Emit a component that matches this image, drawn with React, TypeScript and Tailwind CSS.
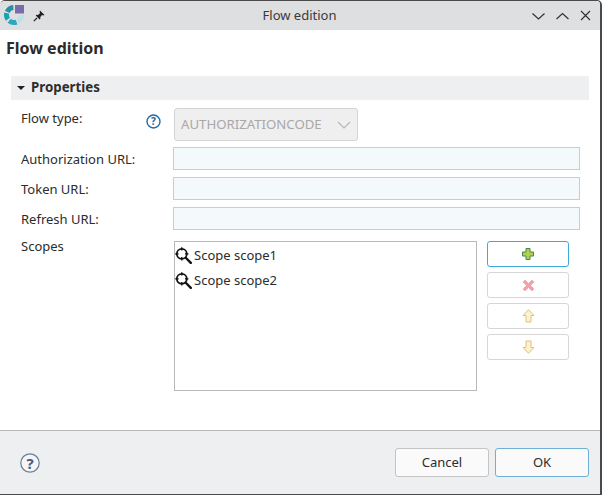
import { ReactNode } from 'react';

function AppLogo() {
  return (
    <svg width="21" height="21" viewBox="0 0 21 21" fill="none" strokeWidth="5">
      <rect x="11" y="0" width="9" height="8.5" fill="#7a6bab" />
      <path d="M9.35 2.53 A7.5 7.5 0 0 0 3.2 6.83" stroke="#2a8fa3" />
      <path d="M2.76 8.06 A7.5 7.5 0 0 0 3.86 14.3" stroke="#18a2b4" />
      <path d="M5.18 15.75 A7.5 7.5 0 0 0 12.57 17.05" stroke="#2fa9ba" />
      <path d="M13.75 16.5 A7.5 7.5 0 0 0 17.5 10" stroke="#b5e3e8" />
    </svg>
  );
}

function PinIcon() {
  return (
    <svg width="12" height="12" viewBox="0 0 12 12">
      <path d="M7 0.5 L11.5 5 L10.2 5.6 L9 5 L7.2 7.2 L7.4 8.8 L6.6 9.4 L2.8 5.5 L3.4 4.7 L5 4.9 L7.2 3 L6.5 1.8 Z" fill="#222" />
      <path d="M4 8 L0.8 11.2" stroke="#222" strokeWidth="1.2" />
    </svg>
  );
}

function ZoomIcon() {
  return (
    <svg width="17" height="17" viewBox="0 0 17 17" className="shrink-0">
      <circle cx="6.8" cy="6.8" r="5" fill="#fff" stroke="#111" strokeWidth="1.8" />
      <path d="M6.8 0.2 V3.6 M6.8 10 V13.4 M0.2 6.8 H3.6 M10 6.8 H13.4" stroke="#111" strokeWidth="1.3" />
      <path d="M11 11 L15.8 15.8" stroke="#111" strokeWidth="2.4" strokeLinecap="round" />
    </svg>
  );
}

function FieldRow({ label, mt }: { label: string; mt: string }) {
  return (
    <div className={`flex items-center ${mt}`}>
      <label className="w-[153px] pl-[1px] pt-[3px] text-[13px] text-[#2c2c2c]">{label}</label>
      <div className="h-[23px] w-[407px] border border-[#c9cdd0] bg-[#f4f9fc]" />
    </div>
  );
}

function SideButton({ children, focused }: { children: ReactNode; focused?: boolean }) {
  return (
    <button
      className={`flex h-[26px] w-[82px] items-center justify-center rounded-[3px] border bg-white ${
        focused ? 'border-[#3fa9dc]' : 'border-[#d6d6d6]'
      }`}
    >
      {children}
    </button>
  );
}

function ScopeItem({ name }: { name: string }) {
  return (
    <div className="flex h-[25px] items-center gap-[2px] text-[13px] text-[#2c2c2c]">
      <ZoomIcon />
      <span>{name}</span>
    </div>
  );
}

export default function App() {
  return (
    <div className="flex h-[495px] w-[602px] flex-col overflow-hidden rounded-t-[5px] border-t border-r-2 border-b border-[#4a4a4a] bg-white font-['Noto_Sans',sans-serif]">
      {/* Title bar */}
      <div className="grid h-[29px] shrink-0 grid-cols-[1fr_auto_1fr] items-center bg-[#dedfe0] pl-[4px] pr-[9px]">
        <div className="flex items-center">
          <AppLogo />
          <div className="ml-[8px]">
            <PinIcon />
          </div>
        </div>
        <div className="pl-[4px] text-center text-[13px] text-[#3a3a3a]">Flow edition</div>
        <div className="flex items-center justify-end gap-[11px]">
          <svg width="13" height="12" viewBox="0 0 13 12">
            <path d="M0.5 3.5 L6.5 9 L12.5 3.5" fill="none" stroke="#333" strokeWidth="1.2" />
          </svg>
          <svg width="13" height="12" viewBox="0 0 13 12">
            <path d="M0.5 9 L6.5 3.5 L12.5 9" fill="none" stroke="#333" strokeWidth="1.2" />
          </svg>
          <svg width="11" height="11" viewBox="0 0 11 11">
            <path d="M1 1 L10 10 M10 1 L1 10" fill="none" stroke="#333" strokeWidth="1.2" />
          </svg>
        </div>
      </div>

      {/* Content */}
      <div className="flex-1 px-[6px]">
        <h1 className="pt-[8px] text-[16px] leading-[20px] font-bold text-[#2b2b2b]">Flow edition</h1>

        <div className="mt-[18px] ml-[5px] mr-[5px] flex h-[24px] items-center rounded-t-[2px] bg-[#eeeff1] pl-[6px]">
          <span className="h-0 w-0 border-x-[4px] border-t-[4px] border-x-transparent border-t-[#222]" />
          <span className="ml-[6px] text-[13.3px] font-bold text-[#2e2e2e]">Properties</span>
        </div>

        <div className="pl-[14px]">
          <div className="mt-[8px] flex h-[33px]">
            <label className="w-[124px] pl-[1px] pt-[1px] text-[13px] leading-[18px] text-[#2c2c2c]">Flow type:</label>
            <svg width="15" height="15" viewBox="0 0 15 15" className="ml-[2px] mt-[6px]">
              <circle cx="7.5" cy="7.5" r="6.5" fill="#fff" stroke="#1f6aa5" strokeWidth="1.4" />
              <text x="7.5" y="11" textAnchor="middle" fontSize="10" fontWeight="700" fill="#1f5f96">?</text>
            </svg>
            <div className="ml-[13px] flex h-[33px] w-[184px] items-center justify-between rounded-[3px] border border-[#d4d4d4] bg-[#efefef] pl-[6px] pr-[6px] text-[13.2px] text-[#a8a8a8]">
              <span>AUTHORIZATIONCODE</span>
              <svg width="14" height="8" viewBox="0 0 14 8">
                <path d="M1 1 L7 7 L13 1" fill="none" stroke="#b5b5b5" strokeWidth="1.1" />
              </svg>
            </div>
          </div>

          <FieldRow label="Authorization URL:" mt="mt-[6px]" />
          <FieldRow label="Token URL:" mt="mt-[7px]" />
          <FieldRow label="Refresh URL:" mt="mt-[7px]" />

          <div className="mt-[11px] flex">
            <label className="w-[154px] pl-[1px] text-[13px] leading-[10px] text-[#2c2c2c]">Scopes</label>
            <div className="h-[150px] w-[303px] border border-[#b9b9b9] bg-white pt-[1px]">
              <ScopeItem name="Scope scope1" />
              <ScopeItem name="Scope scope2" />
            </div>
            <div className="ml-[10px] flex flex-col gap-[5px]">
              <SideButton focused>
                <svg width="12" height="12" viewBox="0 0 12 12">
                  <path d="M4 0.5 H8 V4 H11.5 V8 H8 V11.5 H4 V8 H0.5 V4 H4 Z" fill="#b4cf4e" stroke="#3f8a4d" />
                </svg>
              </SideButton>
              <SideButton>
                <svg width="13" height="13" viewBox="0 0 13 13">
                  <path d="M1 3 L3 1 L6.5 4.5 L10 1 L12 3 L8.5 6.5 L12 10 L10 12 L6.5 8.5 L3 12 L1 10 L4.5 6.5 Z" fill="#f2a0aa" stroke="#ef9aa6" strokeWidth="0.6" />
                </svg>
              </SideButton>
              <SideButton>
                <svg width="13" height="14" viewBox="0 0 13 14">
                  <path d="M6.5 0.7 L12 6.5 H9 V13 H4 V6.5 H1 Z" fill="#fdf2cc" stroke="#dfc083" />
                </svg>
              </SideButton>
              <SideButton>
                <svg width="13" height="14" viewBox="0 0 13 14">
                  <path d="M6.5 13.3 L12 7.5 H9 V1 H4 V7.5 H1 Z" fill="#fdf2cc" stroke="#dfc083" />
                </svg>
              </SideButton>
            </div>
          </div>
        </div>
      </div>

      {/* Footer */}
      <div className="flex h-[64px] shrink-0 items-center border-t border-[#b8b8b8] bg-[#eeeff1] pl-[20px] pr-[11px]">
        <svg width="20" height="20" viewBox="0 0 20 20">
          <circle cx="10" cy="10" r="9.2" fill="#f4f5f7" stroke="#6b7c98" strokeWidth="1.2" />
          <text x="10" y="15.5" textAnchor="middle" fontSize="15" fontWeight="700" fill="#465a7c">?</text>
        </svg>
        <div className="ml-auto flex gap-[6px]">
          <button className="h-[29px] w-[94px] rounded-[3px] border border-[#c4c4c4] bg-[#fafafa] text-[13px] text-[#2c2c2c]">Cancel</button>
          <button className="h-[29px] w-[94px] rounded-[3px] border border-[#6fb1d6] bg-[#fafafa] text-[13px] text-[#2c2c2c]">OK</button>
        </div>
      </div>
    </div>
  );
}
